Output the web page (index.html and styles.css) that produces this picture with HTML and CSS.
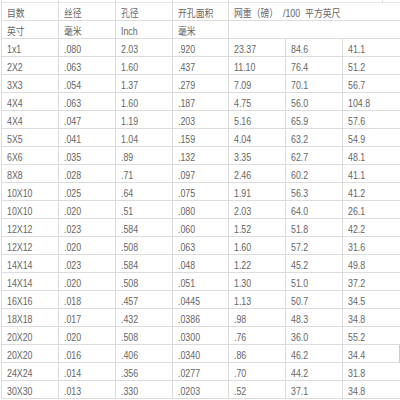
FILE: index.html
```html
<!DOCTYPE html>
<html lang="zh">
<head>
<meta charset="utf-8">
<title>网孔规格表</title>
<link rel="stylesheet" href="styles.css">
</head>
<body>
<div class="sheet">
  <div class="strip"></div><div class="strip"></div><div class="strip"></div><div class="strip"></div>
  <div class="strip strip-wide"><div class="strip-part"></div></div>

  <div class="cell"><span>目数</span></div>
  <div class="cell"><span>丝径</span></div>
  <div class="cell"><span>孔径</span></div>
  <div class="cell"><span>开孔面积</span></div>
  <div class="cell span3"><span>网重（磅）&nbsp;&nbsp;/100&nbsp;&nbsp;平方英尺</span></div>

  <div class="cell"><span>英寸</span></div>
  <div class="cell"><span>毫米</span></div>
  <div class="cell"><span>Inch</span></div>
  <div class="cell"><span>毫米</span></div>
  <div class="cell span3"></div>

  <div class="cell"><span>1x1</span></div><div class="cell"><span>.080</span></div><div class="cell"><span>2.03</span></div><div class="cell"><span>.920</span></div><div class="cell"><span>23.37</span></div><div class="cell"><span>84.6</span></div><div class="cell last"><span>41.1</span></div>
  <div class="cell"><span>2X2</span></div><div class="cell"><span>.063</span></div><div class="cell"><span>1.60</span></div><div class="cell"><span>.437</span></div><div class="cell"><span>11.10</span></div><div class="cell"><span>76.4</span></div><div class="cell last"><span>51.2</span></div>
  <div class="cell"><span>3X3</span></div><div class="cell"><span>.054</span></div><div class="cell"><span>1.37</span></div><div class="cell"><span>.279</span></div><div class="cell"><span>7.09</span></div><div class="cell"><span>70.1</span></div><div class="cell last"><span>56.7</span></div>
  <div class="cell"><span>4X4</span></div><div class="cell"><span>.063</span></div><div class="cell"><span>1.60</span></div><div class="cell"><span>.187</span></div><div class="cell"><span>4.75</span></div><div class="cell"><span>56.0</span></div><div class="cell last"><span>104.8</span></div>
  <div class="cell"><span>4X4</span></div><div class="cell"><span>.047</span></div><div class="cell"><span>1.19</span></div><div class="cell"><span>.203</span></div><div class="cell"><span>5.16</span></div><div class="cell"><span>65.9</span></div><div class="cell last"><span>57.6</span></div>
  <div class="cell"><span>5X5</span></div><div class="cell"><span>.041</span></div><div class="cell"><span>1.04</span></div><div class="cell"><span>.159</span></div><div class="cell"><span>4.04</span></div><div class="cell"><span>63.2</span></div><div class="cell last"><span>54.9</span></div>
  <div class="cell"><span>6X6</span></div><div class="cell"><span>.035</span></div><div class="cell"><span>.89</span></div><div class="cell"><span>.132</span></div><div class="cell"><span>3.35</span></div><div class="cell"><span>62.7</span></div><div class="cell last"><span>48.1</span></div>
  <div class="cell"><span>8X8</span></div><div class="cell"><span>.028</span></div><div class="cell"><span>.71</span></div><div class="cell"><span>.097</span></div><div class="cell"><span>2.46</span></div><div class="cell"><span>60.2</span></div><div class="cell last"><span>41.1</span></div>
  <div class="cell"><span>10X10</span></div><div class="cell"><span>.025</span></div><div class="cell"><span>.64</span></div><div class="cell"><span>.075</span></div><div class="cell"><span>1.91</span></div><div class="cell"><span>56.3</span></div><div class="cell last"><span>41.2</span></div>
  <div class="cell"><span>10X10</span></div><div class="cell"><span>.020</span></div><div class="cell"><span>.51</span></div><div class="cell"><span>.080</span></div><div class="cell"><span>2.03</span></div><div class="cell"><span>64.0</span></div><div class="cell last"><span>26.1</span></div>
  <div class="cell"><span>12X12</span></div><div class="cell"><span>.023</span></div><div class="cell"><span>.584</span></div><div class="cell"><span>.060</span></div><div class="cell"><span>1.52</span></div><div class="cell"><span>51.8</span></div><div class="cell last"><span>42.2</span></div>
  <div class="cell"><span>12X12</span></div><div class="cell"><span>.020</span></div><div class="cell"><span>.508</span></div><div class="cell"><span>.063</span></div><div class="cell"><span>1.60</span></div><div class="cell"><span>57.2</span></div><div class="cell last"><span>31.6</span></div>
  <div class="cell"><span>14X14</span></div><div class="cell"><span>.023</span></div><div class="cell"><span>.584</span></div><div class="cell"><span>.048</span></div><div class="cell"><span>1.22</span></div><div class="cell"><span>45.2</span></div><div class="cell last"><span>49.8</span></div>
  <div class="cell"><span>14X14</span></div><div class="cell"><span>.020</span></div><div class="cell"><span>.508</span></div><div class="cell"><span>.051</span></div><div class="cell"><span>1.30</span></div><div class="cell"><span>51.0</span></div><div class="cell last"><span>37.2</span></div>
  <div class="cell"><span>16X16</span></div><div class="cell"><span>.018</span></div><div class="cell"><span>.457</span></div><div class="cell"><span>.0445</span></div><div class="cell"><span>1.13</span></div><div class="cell"><span>50.7</span></div><div class="cell last"><span>34.5</span></div>
  <div class="cell"><span>18X18</span></div><div class="cell"><span>.017</span></div><div class="cell"><span>.432</span></div><div class="cell"><span>.0386</span></div><div class="cell"><span>.98</span></div><div class="cell"><span>48.3</span></div><div class="cell last"><span>34.8</span></div>
  <div class="cell"><span>20X20</span></div><div class="cell"><span>.020</span></div><div class="cell"><span>.508</span></div><div class="cell"><span>.0300</span></div><div class="cell"><span>.76</span></div><div class="cell"><span>36.0</span></div><div class="cell last"><span>55.2</span></div>
  <div class="cell"><span>20X20</span></div><div class="cell"><span>.016</span></div><div class="cell"><span>.406</span></div><div class="cell"><span>.0340</span></div><div class="cell"><span>.86</span></div><div class="cell"><span>46.2</span></div><div class="cell last sel"><span>34.4</span></div>
  <div class="cell"><span>24X24</span></div><div class="cell"><span>.014</span></div><div class="cell"><span>.356</span></div><div class="cell"><span>.0277</span></div><div class="cell"><span>.70</span></div><div class="cell"><span>44.2</span></div><div class="cell last"><span>31.8</span></div>
  <div class="cell"><span>30X30</span></div><div class="cell"><span>.013</span></div><div class="cell"><span>.330</span></div><div class="cell"><span>.0203</span></div><div class="cell"><span>.52</span></div><div class="cell"><span>37.1</span></div><div class="cell last"><span>34.8</span></div>
</div>
</body>
</html>
```

FILE: styles.css
```css
html, body {
  margin: 0;
  padding: 0;
  background: #ffffff;
}

.sheet {
  display: grid;
  grid-template-columns: 57px 57px 57px 56px 57px 57px 57px;
  grid-template-rows: 3px;
  grid-auto-rows: 18px;
  margin-left: 1px;
  border-left: 1px solid #dcdcdc;
  width: 398px;
  overflow: hidden;
  font-family: "Liberation Sans", Arial, "Noto Sans CJK SC", sans-serif;
  font-size: 10.5px;
  color: #666666;
}

.strip {
  box-sizing: border-box;
  border-right: 1px solid #dcdcdc;
  border-bottom: 1px solid #e6e6e6;
}

.strip-wide {
  grid-column: span 3;
  border-right: none;
}

.strip-part {
  box-sizing: border-box;
  width: 154px;
  height: 100%;
  border-right: 1px solid #dcdcdc;
}

.cell {
  box-sizing: border-box;
  border-right: 1px solid #dcdcdc;
  border-bottom: 1px solid #dcdcdc;
  padding: 3px 0 0 5px;
  line-height: 15px;
  white-space: nowrap;
}

.cell > span {
  display: inline-block;
  transform: scaleX(0.84);
  transform-origin: 0 50%;
}

.span3 {
  grid-column: span 3;
  border-right: none;
}

.last {
  border-right: none;
}

.sel {
  border-right: 1px solid #a8d8ec;
}
```
